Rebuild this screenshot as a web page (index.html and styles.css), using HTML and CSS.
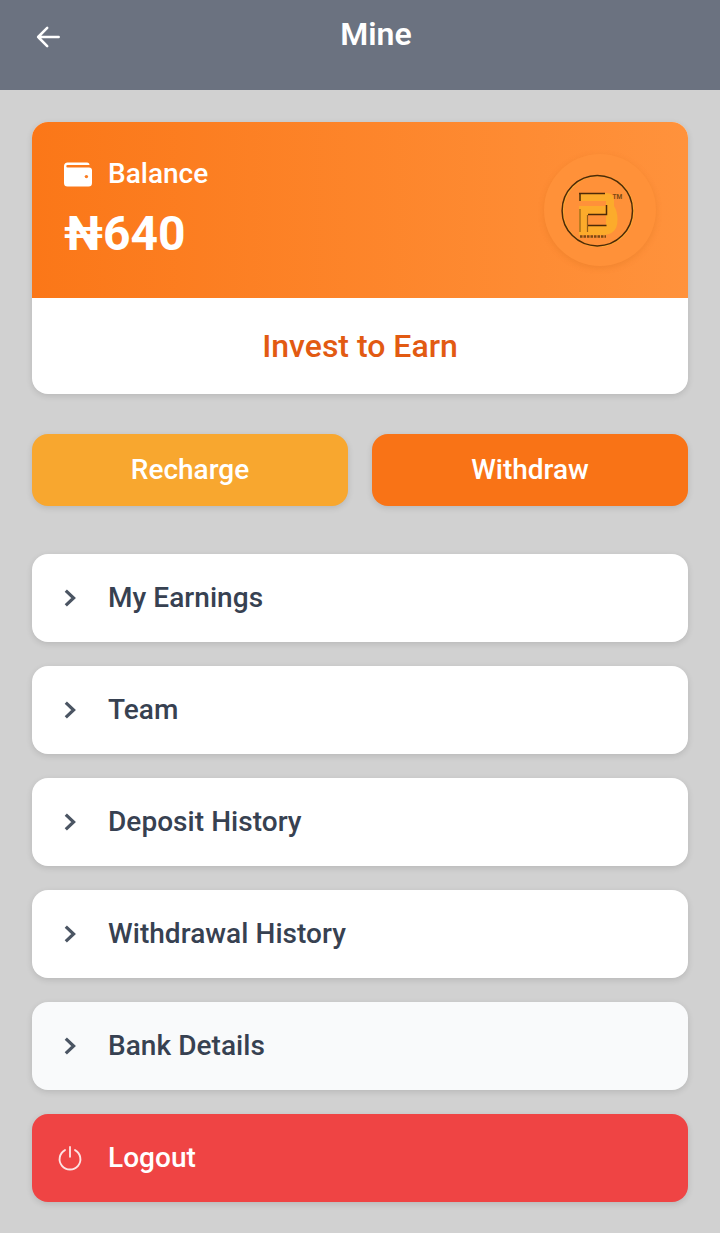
FILE: index.html
```html
<!DOCTYPE html>
<html lang="en">
<head>
<meta charset="utf-8">
<title>Mine</title>
<link rel="stylesheet" href="styles.css">
</head>
<body>
<header class="topbar">
  <svg class="back" viewBox="0 0 24 24" width="32" height="32"><path d="M20 12H4.6M11.4 5.2 4.6 12l6.8 6.8" fill="none" stroke="#fff" stroke-width="1.9" stroke-linecap="round" stroke-linejoin="round"/></svg>
  <h1 class="title">Mine</h1>
</header>
<main class="page">
  <section class="card">
    <div class="card-top">
      <div class="balance-info">
        <div class="balance-label">
          <svg class="wallet" viewBox="0 0 28 25" width="28" height="25"><path d="M4 0.5h19a2.500 2.500 0 0 1 2.500 2.500H3.500a1.200 1.200 0 0 0 0 2.400H25a3 3 0 0 1 3 3V21a3.500 3.500 0 0 1-3.500 3.500H3.500A3.500 3.500 0 0 1 0 21V4a3.500 3.500 0 0 1 4-3.500Z" fill="#fff"/><circle cx="22.400" cy="14.600" r="1.700" fill="#fb7d22"/></svg>
          <span>Balance</span>
        </div>
        <div class="balance-value">₦640</div>
      </div>
      <div class="logo-wrap">
        <svg viewBox="560 170 80 80" width="80" height="80">
          <circle cx="598.100" cy="211" r="35.200" fill="none" stroke="#fbab35" stroke-width="1.600"/>
          <circle cx="597.300" cy="210.700" r="35.200" fill="none" stroke="#4d2a08" stroke-width="1.500"/>
          <path fill-rule="evenodd" d="M579 193H606Q614 193 614 200V206Q617.500 211 617.500 220Q617.500 235 602 235H579V206H606V201H579ZM587.500 215H606V225H587.500Z" fill="#fcab2b"/>
          <path d="M579 193.500H605M580 193.500V201M588 214.500H606.500V205M588 225.500H606.500" fill="none" stroke="#4d2a08" stroke-width="1.500"/>
          <path d="M580 209V232M587.500 215V232" fill="none" stroke="#7a4a12" stroke-width="1.200" opacity="0.800"/>
          <path d="M580 236.500H606" fill="none" stroke="#7a4a12" stroke-width="2.400" stroke-dasharray="2.500 1"/>
          <text class="tm" x="612.500" y="198.500">TM</text>
        </svg>
      </div>
    </div>
    <div class="card-bottom">Invest to Earn</div>
  </section>

  <div class="actions">
    <a class="action action-recharge"><span>Recharge</span></a>
    <a class="action action-withdraw"><span>Withdraw</span></a>
  </div>

  <nav class="menu">
    <a class="item"><svg class="chev" viewBox="0 0 14 20" width="14" height="20"><path d="M1.800 2.600 9.600 10l-7.800 7.400" fill="none" stroke="#4b5563" stroke-width="3.200"/></svg><span>My Earnings</span></a>
    <a class="item"><svg class="chev" viewBox="0 0 14 20" width="14" height="20"><path d="M1.800 2.600 9.600 10l-7.800 7.400" fill="none" stroke="#4b5563" stroke-width="3.200"/></svg><span>Team</span></a>
    <a class="item"><svg class="chev" viewBox="0 0 14 20" width="14" height="20"><path d="M1.800 2.600 9.600 10l-7.800 7.400" fill="none" stroke="#4b5563" stroke-width="3.200"/></svg><span>Deposit History</span></a>
    <a class="item"><svg class="chev" viewBox="0 0 14 20" width="14" height="20"><path d="M1.800 2.600 9.600 10l-7.800 7.400" fill="none" stroke="#4b5563" stroke-width="3.200"/></svg><span>Withdrawal History</span></a>
    <a class="item item-muted"><svg class="chev" viewBox="0 0 14 20" width="14" height="20"><path d="M1.800 2.600 9.600 10l-7.800 7.400" fill="none" stroke="#4b5563" stroke-width="3.200"/></svg><span>Bank Details</span></a>
    <a class="item item-logout"><svg class="power" viewBox="0 0 24 24" width="28" height="28"><path d="M12 2.500v8.500M7.700 5.200A8.900 8.900 0 1 0 16.300 5.200" fill="none" stroke="#fde2e2" stroke-width="1.600" stroke-linecap="round"/></svg><span>Logout</span></a>
  </nav>
</main>
</body>
</html>
```

FILE: styles.css
```css
* { box-sizing: border-box; }
html, body { margin: 0; padding: 0; }
body {
  width: 720px;
  min-height: 1233px;
  background: #d1d1d1;
  font-family: Roboto, "Liberation Sans", sans-serif;
  overflow: hidden;
}
.topbar {
  height: 90px;
  background: #6b7280;
  display: flex;
  align-items: flex-start;
  padding: 21px 32px 0;
}
.back { flex: none; }
.title {
  flex: 1;
  margin: -4px 0 0;
  text-align: center;
  color: #fff;
  font-size: 32px;
  line-height: 34px;
  font-weight: 600;
}
.page {
  padding: 32px;
  display: flex;
  flex-direction: column;
  gap: 40px;
}
.card {
  border-radius: 16px;
  overflow: hidden;
  background: #fff;
  box-shadow: 0 2px 6px rgba(0, 0, 0, 0.12);
}
.card-top {
  height: 176px;
  background: linear-gradient(90deg, #fb7718, #ff923c);
  padding: 32px;
  display: flex;
  justify-content: space-between;
  align-items: center;
}
.balance-info {
  display: flex;
  flex-direction: column;
  gap: 12px;
  margin-top: -4px;
}
.balance-label {
  display: flex;
  align-items: center;
  gap: 16px;
  color: #fff;
  font-size: 28px;
  line-height: 40px;
  font-weight: 500;
}
.balance-value {
  color: #fff;
  font-size: 48px;
  line-height: 56px;
  font-weight: 700;
}
.logo-wrap {
  width: 112px;
  height: 112px;
  border-radius: 50%;
  background: #ff9139;
  box-shadow: 0 2px 6px rgba(180, 90, 10, 0.18);
  display: flex;
  align-items: center;
  justify-content: center;
}
.tm {
  font-size: 6.500px;
  font-weight: 700;
  fill: #7a4a12;
}
.card-bottom {
  height: 96px;
  display: flex;
  align-items: center;
  justify-content: center;
  color: #e25a12;
  font-size: 32px;
  font-weight: 500;
}
.actions {
  display: grid;
  grid-template-columns: 1fr 1fr;
  gap: 24px;
}
.action {
  height: 72px;
  border-radius: 16px;
  display: flex;
  align-items: center;
  justify-content: center;
  padding-bottom: 2px;
  color: #fff;
  font-size: 28px;
  font-weight: 500;
  box-shadow: 0 2px 6px rgba(0, 0, 0, 0.12);
}
.action-recharge { background: #f8a72f; }
.action-withdraw { background: #f97316; }
.menu {
  display: flex;
  flex-direction: column;
  gap: 24px;
  margin-top: 8px;
}
.item {
  height: 88px;
  border-radius: 16px;
  background: #fff;
  display: flex;
  align-items: center;
  padding-left: 32px;
  color: #374151;
  font-size: 28px;
  font-weight: 500;
  letter-spacing: 0.05px;
  box-shadow: 0 2px 6px rgba(0, 0, 0, 0.12);
}
.item span { margin: 0 0 2px 30px; }
.chev { flex: none; }
.item-muted { background: #f9fafb; }
.item-logout { background: #ef4444; color: #fff; }
.power { flex: none; margin: 0 -6px 0 -8px; }
```
